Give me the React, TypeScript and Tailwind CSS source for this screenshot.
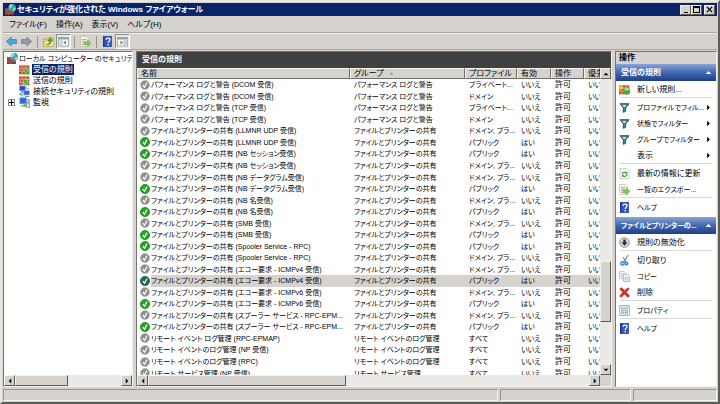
import type { ReactNode } from "react";

const RAISED =
  "border border-t-[#f4f3f0] border-l-[#f4f3f0] border-r-[#5c5a56] border-b-[#5c5a56] bg-[#d6d3ce]";

type Rule = { name: string; group: string; profile: string; on?: boolean; selected?: boolean };

const PERF = "パフォーマンス ログと警告";
const SHARE = "ファイルとプリンターの共有";
const EVENT = "リモート イベントのログ管理";
const share = (detail: string, on = false, selected = false): Rule => ({
  name: `${SHARE} (${detail}`,
  group: SHARE,
  profile: on ? "パブリック" : "ドメイン, プラ...",
  on,
  selected,
});

const rules: Rule[] = [
  { name: `${PERF} (DCOM 受信)`, group: PERF, profile: "プライベート..." },
  { name: `${PERF} (DCOM 受信)`, group: PERF, profile: "ドメイン" },
  { name: `${PERF} (TCP 受信)`, group: PERF, profile: "プライベート..." },
  { name: `${PERF} (TCP 受信)`, group: PERF, profile: "ドメイン" },
  share("LLMNR UDP 受信)"),
  share("LLMNR UDP 受信)", true),
  share("NB セッション受信)", true),
  share("NB セッション受信)"),
  share("NB データグラム受信)"),
  share("NB データグラム受信)", true),
  share("NB 名受信)"),
  share("NB 名受信)", true),
  share("SMB 受信)"),
  share("SMB 受信)", true),
  share("Spooler Service - RPC)", true),
  share("Spooler Service - RPC)"),
  share("エコー要求 - ICMPv4 受信)"),
  share("エコー要求 - ICMPv4 受信)", true, true),
  share("エコー要求 - ICMPv6 受信)"),
  share("エコー要求 - ICMPv6 受信)", true),
  share("スプーラー サービス - RPC-EPM..."),
  share("スプーラー サービス - RPC-EPM...", true),
  { name: "リモート イベント ログ管理 (RPC-EPMAP)", group: EVENT, profile: "すべて" },
  { name: `${EVENT} (NP 受信)`, group: EVENT, profile: "すべて" },
  { name: `${EVENT} (RPC)`, group: EVENT, profile: "すべて" },
  { name: "リモート サービス管理 (NP 受信)", group: "リモート サービス管理", profile: "すべて" },
];

function Svg({ children, className = "size-[11px]" }: { children: ReactNode; className?: string }) {
  return (
    <svg viewBox="0 0 16 16" aria-hidden="true" className={`block shrink-0 ${className}`}>
      {children}
    </svg>
  );
}

const Bricks = () => (
  <>
    <rect x="0" y="2" width="15" height="13" fill="#c8503a" />
    <path d="M0 6h15M0 10.5h15M4.5 2v4M10 2v4M2 6v4.500M7.5 6v4.500M12 6v4.500M4.5 10.5V15M10 10.5V15" stroke="#eeb3a0" strokeWidth="1" />
  </>
);

const FirewallIcon = () => (
  <Svg>
    <rect x="0" y="6" width="13" height="10" fill="#8c3a2c" />
    <path d="M0 9.5h13M0 12.5h13M4 6v3.5M9 9.5v3M5 12.5V16" stroke="#c07a68" strokeWidth=".8" />
    <circle cx="10.5" cy="5.5" r="5.5" fill="#2f9fd0" />
    <path d="M8 1c2 0 4 1 3 3s-4 1-4 4c-2-2-2-5 1-7zM12 6c2-1 3 0 4 0-1 3-2 4-4 5-1-2-1-4 0-5z" fill="#8fdc86" />
    <path d="M6 3q2-2 4-2" stroke="#dff6ff" strokeWidth="1.2" fill="none" />
  </Svg>
);
const InboundIcon = () => (
  <Svg>
    <Bricks />
    <path d="M15.500 15.500H8l2.500-2.500L6 8.500 8.500 6l4.500 4.500L15.500 8z" fill="#35b82e" stroke="#d8f5d0" strokeWidth=".7" />
  </Svg>
);
const OutboundIcon = () => (
  <Svg>
    <Bricks />
    <path d="M6.500 6.500h7.500l-2.500 2.500 4.500 4.500-2.500 2.500L9 11.500 6.500 14z" fill="#35b82e" stroke="#d8f5d0" strokeWidth=".7" />
  </Svg>
);
const NewRuleIcon = () => (
  <Svg>
    <Bricks />
    <path d="M3 1l1 2 2-1-1 2 2 1-2 1 1 2-2-1-1 2-1-2-2 1 1-2-2-1 2-1-1-2 2 1z" fill="#f6c928" />
    <path d="M7 7.500l4-3 5 3v6l-4.500 2.500L7 13z" fill="#3fae3a" />
    <path d="M7 7.500l4.500 2.500L16 7.500l-5-3z" fill="#a5e08a" />
  </Svg>
);
const ConnectionIcon = () => (
  <Svg>
    <rect x="1" y="0" width="8" height="7" fill="#1c4fc4" stroke="#7b97c9" />
    <rect x="7" y="7" width="8" height="6" fill="#2b63dc" stroke="#8aa3d0" />
    <path d="M3 9h3M0 12h5M9 15.5h6M5 7.5v1.5" stroke="#586d96" strokeWidth="1.4" />
    <path d="M1 10l5 5M10 2l4 3" stroke="#43a9dd" strokeWidth="1.5" />
  </Svg>
);
const MonitorIcon = () => (
  <Svg>
    <rect x="1" y="1" width="10" height="9" rx="1" fill="#2d67dd" stroke="#a8b7d0" strokeWidth="1.4" />
    <path d="M3 12h6v2H2z" fill="#9ba8bd" />
    <rect x="10.5" y="4" width="5" height="11" fill="#d5dbe7" stroke="#7b879d" />
    <path d="M11.5 7h3M11.5 9h3" stroke="#6b7b98" />
    <circle cx="9" cy="12" r="2.6" fill="#5cc14f" />
  </Svg>
);
const HelpIcon = () => (
  <Svg>
    <path d="M1.5 0h13v16h-13z" fill="#3557c4" />
    <path d="M1.5 0h2v16h-2z" fill="#1d3490" />
    <path d="M6 5.5C6 3.6 7.2 3 8.8 3s2.9.9 2.9 2.4c0 2-2.7 2.2-2.7 4.6" stroke="#fff" strokeWidth="1.8" fill="none" />
    <circle cx="9" cy="12.8" r="1.2" fill="#fff" />
  </Svg>
);
const ExportIcon = () => (
  <Svg>
    <path d="M1 .5h8.5l3 3v12H1z" fill="#fbf8df" stroke="#b4b19c" />
    <path d="M3 5h7M3 7.5h5M3 10h3M3 12.5h3" stroke="#8e8c7c" />
    <path d="M6.500 8.5H11V6l5 4.700-5 4.600V13H6.500z" fill="#7fd05a" stroke="#3f9a2c" strokeWidth=".7" />
  </Svg>
);
const FilterIcon = () => (
  <Svg>
    <path d="M1.500 2.500h13L9.700 8.300v5.200L6.300 15V8.300z" fill="#3f9694" stroke="#2c4753" strokeWidth="1.400" strokeLinejoin="round" />
    <path d="M4.500 4.200h6L8 7.700z" fill="#c7eeea" />
  </Svg>
);
const RefreshIcon = () => (
  <Svg>
    <path d="M1.5.5h9.5l3.5 3.5v11.5h-13z" fill="#f7faf6" stroke="#b3b8b3" />
    <path d="M4.7 9.5A3.4 3.4 0 0 1 10.5 7M11.5 8.5a3.4 3.4 0 0 1-6 2.7" stroke="#37a833" strokeWidth="1.6" fill="none" />
    <path d="M12 4.8V8.5H8.4zM4.3 13.5V9.8H8z" fill="#37a833" />
  </Svg>
);
const DisableIcon = () => (
  <Svg>
    <circle cx="8" cy="8" r="7" fill="#d8d8d8" stroke="#8e8e8e" strokeWidth="1.4" />
    <path d="M6.3 3.5h3.4v4h2.8L8 12.7 3.5 7.5h2.8z" fill="#2e2e2e" />
  </Svg>
);
const CutIcon = () => (
  <Svg>
    <path d="M13.5 0L7 10M6 3l4.5 8" stroke="#7d8ea0" strokeWidth="1.7" />
    <circle cx="5" cy="12.2" r="2.5" fill="#b7dcf8" stroke="#2387d8" strokeWidth="1.8" />
    <circle cx="10.8" cy="12.4" r="2" fill="#b7dcf8" stroke="#2387d8" strokeWidth="1.8" />
  </Svg>
);
const CopyIcon = () => (
  <Svg>
    <path d="M.8.8h6.7L10 3.3V11H.8z" fill="#f4f7fb" stroke="#9fb0c8" />
    <path d="M2.5 4h5M2.5 6h5M2.5 8h3" stroke="#a9bcd8" />
    <path d="M6.3 5h6.2l2.8 2.8v7.5h-9z" fill="#f4f7fb" stroke="#8fa3c0" />
    <path d="M8 9h5.5M8 11h5.5M8 13h5.5" stroke="#9cb3d4" />
  </Svg>
);
const DeleteIcon = () => (
  <Svg>
    <path d="M1 3.2L3.5.8 8.2 5 13 1l2 1.8-4.4 4.8L15.5 13 13 15.2 8 10.4l-5 4.8L.8 13l4.6-5.3z" fill="#e42822" stroke="#b5120f" strokeWidth=".6" />
  </Svg>
);
const PropertiesIcon = () => (
  <Svg>
    <rect x="1" y=".8" width="14" height="14.4" fill="#eef2f4" stroke="#8e9ba4" />
    <path d="M1 3h14" stroke="#a9b7c0" />
    <rect x="3.5" y="5" width="9" height="8" fill="#d9e4ea" stroke="#9fb0ba" />
    <path d="M5 8l1 1 2-2M5 11h2M9 8.5h2.5M9 11h2.5" stroke="#5f7f95" fill="none" />
  </Svg>
);
const ArrowIcon = ({ forward = false }: { forward?: boolean }) => (
  <Svg>
    {forward ? (
      <path d="M15.5 8L8.500 1.500v3.700H.8v5.600h7.700v3.700z" fill="#9a9b9b" stroke="#6f7070" />
    ) : (
      <path d="M.5 8l7-6.500v3.700h7.700v5.600H7.500v3.700z" fill="#42aee8" stroke="#1d78bb" />
    )}
  </Svg>
);
const FolderUpIcon = () => (
  <Svg>
    <path d="M.8 4.500H6L7.500 3h7.200v12H.8z" fill="#f1cf62" stroke="#b58f2a" />
    <path d="M1.500 14.500L4 7.500h11.500L14 14.500z" fill="#fbe695" />
    <path d="M5 12c3 0 4.500-1.600 4.500-4.500H7L10.500 2 14 7.500h-2.300C11.500 11.500 9 13.500 5 13z" fill="#48ae38" stroke="#267a1e" strokeWidth=".5" />
  </Svg>
);
const PaneIcon = ({ right = false }: { right?: boolean }) => (
  <Svg>
    <rect x=".7" y="2" width="14.6" height="12.5" fill="#fafafa" stroke="#8b9097" />
    <path d="M1 2h14v3H1z" fill="#8e9db5" />
    {right ? (
      <>
        <path d="M10.5 5v9" stroke="#8b9097" />
        <path d="M11.5 6h3v7h-3z" fill="#c6d5ea" />
        <path d="M5 7l4 2.6-4 2.6z" fill="#3ba338" />
      </>
    ) : (
      <>
        <path d="M5.5 5v9" stroke="#8b9097" />
        <path d="M2 6h3v7H2z" fill="#c6d5ea" />
        <path d="M11.5 7v5.2l-4-2.6z" fill="#3ba338" />
      </>
    )}
  </Svg>
);

function StatusIcon({ on, selected }: { on?: boolean; selected?: boolean }) {
  const fill = selected ? "#1d6b4c" : on ? "#21a821" : "#8f8f8f";
  const edge = selected ? "#174a52" : on ? "#128012" : "#b9b9b9";
  return (
    <Svg className="size-[10px]">
      <circle cx="8" cy="8" r="7.3" fill={fill} stroke={edge} strokeWidth="1.2" />
      <path d="M4.5 8.2l2.7 3.3 4-7.3" stroke="#fff" strokeWidth="1.9" fill="none" />
    </Svg>
  );
}

type Dir = "up" | "down" | "left" | "right";
const arrows: Record<Dir, string> = {
  up: "M3 10.5h10l-5-5z",
  down: "M3 5.5h10l-5 5z",
  left: "M10.5 3v10l-5-5z",
  right: "M5.5 3v10l5-5z",
};
const Triangle = ({ dir, className = "size-2" }: { dir: Dir; className?: string }) => (
  <Svg className={className}>
    <path d={arrows[dir]} fill="currentColor" />
  </Svg>
);

function ScrollButton({ dir, label }: { dir: Dir; label: string }) {
  return (
    <button type="button" aria-label={label} className={`flex size-[11px] shrink-0 items-center justify-center ${RAISED}`}>
      <Triangle dir={dir} />
    </button>
  );
}

function HScroll({ thumb }: { thumb: string }) {
  return (
    <div className="flex h-[11px] min-w-0 flex-1 bg-[#ebe9e6]">
      <ScrollButton dir="left" label="左へスクロール" />
      <div className="min-w-0 flex-1">
        <div className={`h-full ${thumb} ${RAISED}`} />
      </div>
      <ScrollButton dir="right" label="右へスクロール" />
    </div>
  );
}

function ToolButton({ label, pressed = false, children }: { label: string; pressed?: boolean; children: ReactNode }) {
  return (
    <button
      type="button"
      aria-label={label}
      className={
        pressed
          ? "flex h-[15px] w-[15px] items-center justify-center border border-t-[#8f8d88] border-l-[#8f8d88] border-r-white border-b-white bg-[#eae8e4]"
          : "flex h-[15px] w-[15px] items-center justify-center"
      }
    >
      {children}
    </button>
  );
}
const ToolSeparator = () => <div className="mx-[3px] h-3 w-px bg-[#96948f]" />;

function TreeItem({ icon, label, selected = false, expandable = false }: { icon: ReactNode; label: string; selected?: boolean; expandable?: boolean }) {
  return (
    <li className="flex h-[11px] items-center">
      <span className="flex w-[15px] justify-center">
        {expandable && (
          <button type="button" aria-label={`${label}を展開`} className="flex size-[7px] items-center justify-center border border-[#8c8c8c]">
            <Svg className="size-[5px]">
              <path d="M8 0v16M0 8h16" stroke="#000" strokeWidth="3.2" />
            </Svg>
          </button>
        )}
      </span>
      {icon}
      <button type="button" className={`ml-0.5 h-[11px] px-px leading-[11px] whitespace-nowrap ${selected ? "bg-[#0a246a] text-white" : ""}`}>
        {label}
      </button>
    </li>
  );
}

function ActionHeader({ children, compact = false }: { children: ReactNode; compact?: boolean }) {
  return (
    <h3
      className={`flex h-[17px] items-center justify-between bg-linear-to-b from-[#8aa5d6] via-[#4468ae] to-[#1d3f88] pr-[3px] pl-[5px] font-bold whitespace-nowrap text-white ${compact ? "text-[7px]" : ""}`}
    >
      <span>{children}</span>
      <Triangle dir="up" className="size-[9px]" />
    </h3>
  );
}

function Action({ icon, label, submenu = false, compact = false }: { icon?: ReactNode; label: string; submenu?: boolean; compact?: boolean }) {
  return (
    <button type="button" className={`flex h-4 w-full items-center pl-[3px] text-left whitespace-nowrap ${compact ? "text-[7px]" : ""}`}>
      <span className="flex w-[18px] shrink-0">{icon}</span>
      <span className="flex-1">{label}</span>
      {submenu && <Triangle dir="right" className="mr-[3px] size-[9px]" />}
    </button>
  );
}
const ActionSeparator = () => <hr className="mr-1 mb-px ml-1 border-t border-[#d9d9d9]" />;

const headers = ["名前", "グループ", "プロファイル", "有効", "操作", "優先"];

export default function App() {
  return (
    <div
      lang="ja"
      className="flex h-screen flex-col overflow-hidden border-2 border-t-[#e8e6e2] border-r-[#5f5d5a] border-b-[#5f5d5a] border-l-[#e8e6e2] bg-[#d6d3ce] p-px font-['Liberation_Sans','Noto_Sans_CJK_JP',sans-serif] text-[8px] leading-[11px] text-black [font-feature-settings:'palt']"
    >
      <header className="flex h-[13px] shrink-0 items-center bg-[#0a246a] px-0.5 text-white">
        <FirewallIcon />
        <h1 className="ml-px flex-1 leading-[13px] font-bold whitespace-nowrap">セキュリティが強化された Windows ファイアウォール</h1>
        <div className="flex text-black">
          <button type="button" aria-label="最小化" className={`flex h-[10px] w-[11px] items-end justify-center ${RAISED}`}>
            <span className="mb-px h-px w-1 bg-black" />
          </button>
          <button type="button" aria-label="最大化" className={`flex h-[10px] w-[11px] items-center justify-center ${RAISED}`}>
            <span className="size-[7px] border border-t-2 border-black" />
          </button>
          <button type="button" aria-label="閉じる" className={`ml-0.5 flex h-[10px] w-[11px] items-center justify-center ${RAISED}`}>
            <Svg className="size-[7px]">
              <path d="M2 2l12 12M14 2L2 14" stroke="#000" strokeWidth="3" />
            </Svg>
          </button>
        </div>
      </header>

      <nav className="mt-px flex h-4 shrink-0 items-center gap-[9px] border-b border-[#aaa8a4] pl-1.5 leading-[15px] whitespace-nowrap">
        <button type="button">ファイル(F)</button>
        <button type="button">操作(A)</button>
        <button type="button">表示(V)</button>
        <button type="button">ヘルプ(H)</button>
      </nav>

      <div role="toolbar" className="flex h-[17px] shrink-0 items-center border-t border-b border-t-[#efedea] border-b-[#aaa8a4] pl-px">
        <ToolButton label="戻る"><ArrowIcon /></ToolButton>
        <ToolButton label="進む"><ArrowIcon forward /></ToolButton>
        <ToolSeparator />
        <ToolButton label="上へ"><FolderUpIcon /></ToolButton>
        <ToolButton label="コンソール ツリーの表示" pressed><PaneIcon /></ToolButton>
        <ToolSeparator />
        <ToolButton label="一覧のエクスポート"><ExportIcon /></ToolButton>
        <ToolSeparator />
        <ToolButton label="ヘルプ"><HelpIcon /></ToolButton>
        <ToolButton label="操作ウィンドウの表示" pressed><PaneIcon right /></ToolButton>
      </div>

      <main className="mt-px flex min-h-0 flex-1 gap-[3px]">
        <aside className="flex w-[130px] shrink-0 flex-col border border-t-[#77756f] border-r-[#f4f3f0] border-b-[#f4f3f0] border-l-[#77756f] bg-white">
          <ul className="min-h-0 flex-1 overflow-hidden pt-px">
            <li className="flex h-[11px] items-center pl-[3px]">
              <FirewallIcon />
              <button type="button" className="ml-px text-[7px] leading-[11px] whitespace-nowrap">ローカル コンピューター のセキュリテ-</button>
            </li>
            <TreeItem icon={<InboundIcon />} label="受信の規則" selected />
            <TreeItem icon={<OutboundIcon />} label="送信の規則" />
            <TreeItem icon={<ConnectionIcon />} label="接続セキュリティの規則" />
            <TreeItem icon={<MonitorIcon />} label="監視" expandable />
          </ul>
          <div className="flex">
            <HScroll thumb="w-[53px]" />
          </div>
        </aside>

        <section className="flex min-w-0 flex-1 flex-col border border-t-[#77756f] border-r-[#f4f3f0] border-b-[#f4f3f0] border-l-[#77756f] bg-white">
          <h2 className="h-4 shrink-0 bg-[#404040] pl-[5px] leading-4 font-bold text-white">受信の規則</h2>
          <div className="flex min-h-0 flex-1">
            <div className="min-w-0 flex-1 overflow-hidden">
              <table className="h-[311px] w-full table-fixed border-collapse whitespace-nowrap">
                <colgroup>
                  <col className="w-[14px]" />
                  <col />
                  <col className="w-[115px]" />
                  <col className="w-[52px]" />
                  <col className="w-[34px]" />
                  <col className="w-[33px]" />
                  <col className="w-[16px]" />
                </colgroup>
                <thead>
                  <tr>
                    {headers.map((h, i) => (
                      <th key={h} scope="col" colSpan={i === 0 ? 2 : 1} className="overflow-hidden p-0 text-left align-top font-normal">
                        <div className="flex h-[11px] items-center border border-t-[#f4f3f0] border-r-[#6d6b66] border-b-[#6d6b66] border-l-[#f4f3f0] bg-[#d6d3ce] pl-[3px] leading-[9px]">
                          {h}
                          {h === "グループ" && <Triangle dir="up" className="ml-1 size-[7px] text-[#8c8a85]" />}
                        </div>
                      </th>
                    ))}
                  </tr>
                </thead>
                <tbody className="text-[7px] leading-[11px]">
                  {rules.map((r, i) => {
                    const bg = r.selected ? "bg-[#d6d3ce]" : "";
                    return (
                      <tr key={i}>
                        <td className="p-0 pl-[3px]">
                          <StatusIcon on={r.on} selected={r.selected} />
                        </td>
                        <td className={`p-0 ${bg}`}>{r.name}</td>
                        <td className={`p-0 pl-1 ${bg}`}>{r.group}</td>
                        <td className={`p-0 pl-1 ${bg}`}>{r.profile}</td>
                        <td className={`p-0 pl-1 ${bg}`}>{r.on ? "はい" : "いいえ"}</td>
                        <td className={`p-0 pl-1 text-[8px] ${bg}`}>許可</td>
                        <td className={`overflow-hidden p-0 pl-1 ${bg}`}>いいえ</td>
                      </tr>
                    );
                  })}
                </tbody>
              </table>
            </div>
            <div className="flex w-[11px] shrink-0 flex-col bg-[#ebe9e6]">
              <ScrollButton dir="up" label="上へスクロール" />
              <div className="flex min-h-0 flex-1 flex-col justify-end pb-[42px]">
                <div className={`h-[61px] ${RAISED}`} />
              </div>
              <ScrollButton dir="down" label="下へスクロール" />
            </div>
          </div>
          <div className="flex bg-[#d6d3ce] pr-[11px]">
            <HScroll thumb="w-[198px]" />
          </div>
        </section>

        <aside className="flex w-[102px] shrink-0 flex-col border border-t-[#77756f] border-r-[#f4f3f0] border-b-[#f4f3f0] border-l-[#77756f] bg-white">
          <h2 className="h-3 shrink-0 bg-[#d6d3ce] pl-[3px] leading-3 font-bold">操作</h2>
          <ActionHeader>受信の規則</ActionHeader>
          <Action icon={<NewRuleIcon />} label="新しい規則..." />
          <ActionSeparator />
          <Action icon={<FilterIcon />} label="プロファイルでフィル..." submenu compact />
          <Action icon={<FilterIcon />} label="状態でフィルター" submenu compact />
          <Action icon={<FilterIcon />} label="グループでフィルター" submenu compact />
          <Action label="表示" submenu />
          <ActionSeparator />
          <Action icon={<RefreshIcon />} label="最新の情報に更新" />
          <Action icon={<ExportIcon />} label="一覧のエクスポー..." compact />
          <ActionSeparator />
          <Action icon={<HelpIcon />} label="ヘルプ" compact />
          <div className="mt-0.5">
            <ActionHeader compact>ファイルとプリンターの...</ActionHeader>
          </div>
          <Action icon={<DisableIcon />} label="規則の無効化" />
          <ActionSeparator />
          <Action icon={<CutIcon />} label="切り取り" />
          <Action icon={<CopyIcon />} label="コピー" compact />
          <Action icon={<DeleteIcon />} label="削除" />
          <ActionSeparator />
          <Action icon={<PropertiesIcon />} label="プロパティ" compact />
          <ActionSeparator />
          <Action icon={<HelpIcon />} label="ヘルプ" compact />
        </aside>
      </main>

      <footer className="mt-0.5 flex h-3 shrink-0 gap-0.5">
        <div className="flex-1 border border-t-[#96948f] border-r-[#f4f3f0] border-b-[#f4f3f0] border-l-[#96948f]" />
        <div className="w-[131px] border border-t-[#96948f] border-r-[#f4f3f0] border-b-[#f4f3f0] border-l-[#96948f]" />
        <div className="w-[84px] border border-t-[#96948f] border-r-[#f4f3f0] border-b-[#f4f3f0] border-l-[#96948f]" />
      </footer>
    </div>
  );
}
